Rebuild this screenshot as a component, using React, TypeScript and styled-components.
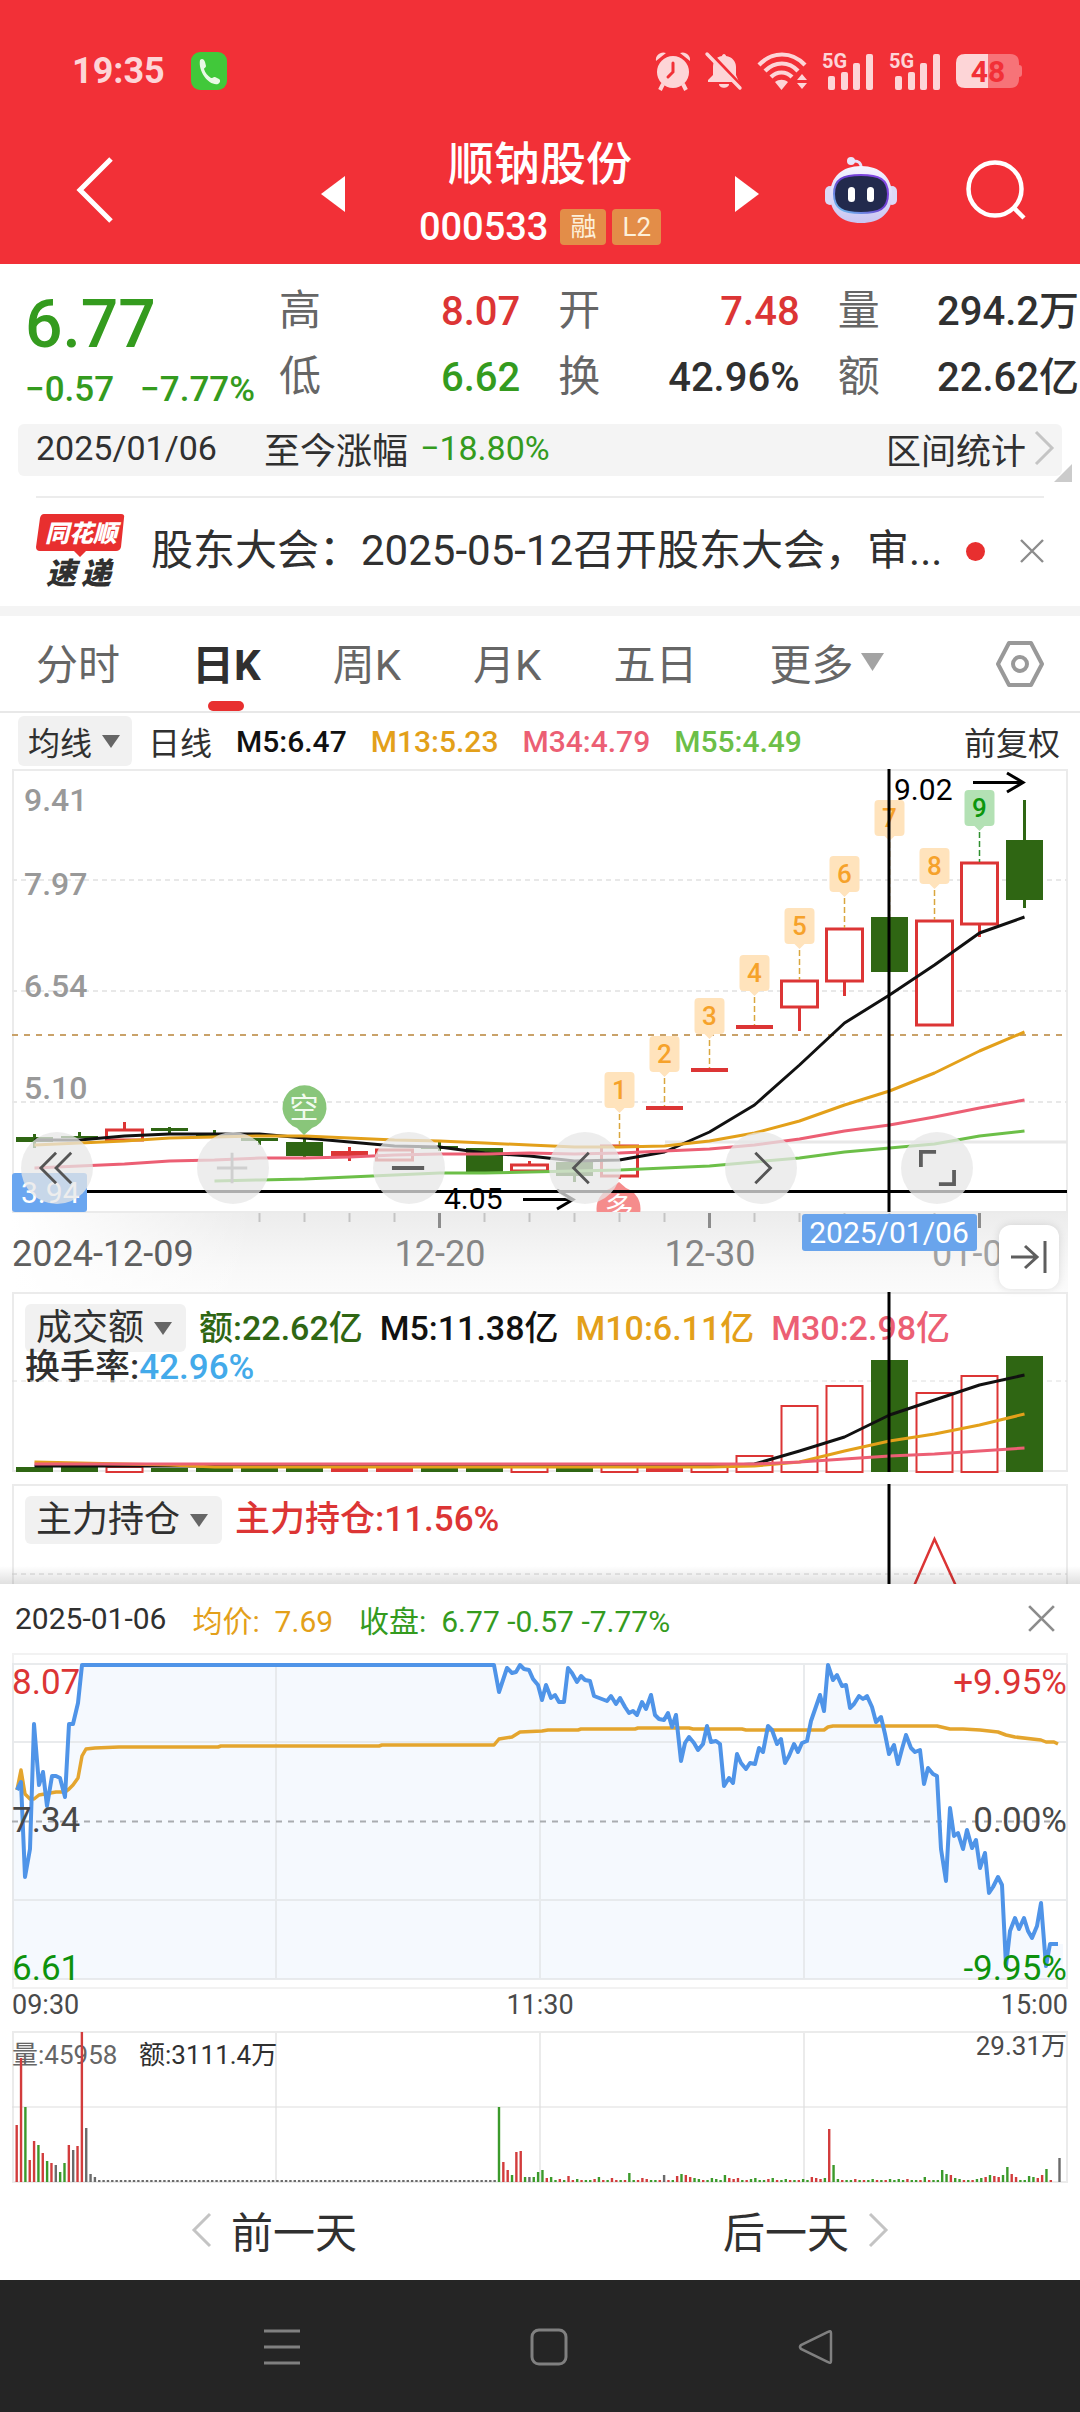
import React from 'react';
import styled, { createGlobalStyle } from 'styled-components';

const RED = '#f23037';
const UP = '#dc3535';
const DOWN = '#349b1e';
const CANDLE_DOWN = '#2f6613';
const INK = '#303030';
const GREY = '#666666';
const ORANGE = '#e3a01a';
const PINK = '#ec5f74';
const LIME = '#6cbf48';
const FONT = 'Roboto, "Noto Sans CJK SC", sans-serif';

const GlobalStyle = createGlobalStyle`
  * { box-sizing: border-box; }
  body { margin: 0; background: #ffffff; font-family: ${FONT}; color: ${INK}; }
  button { font: inherit; color: inherit; background: none; border: 0; padding: 0; margin: 0; cursor: pointer; white-space: nowrap; }
  svg { display: block; flex-shrink: 0; overflow: visible; }
`;

/* ---------- shared pieces ---------- */

const Page = styled.div`
  display: flex;
  flex-direction: column;
  min-width: 0;
  overflow: hidden;
`;

const IconButton = styled.button`
  display: flex;
  align-items: center;
  justify-content: center;
`;

const ChartSvg = styled.svg`
  width: 100%;
  height: auto;
  position: relative;
  overflow: hidden;
  pointer-events: none;
  font-family: ${FONT};
`;

const Tint = styled.span<{ $color: string }>`
  color: ${(p) => p.$color};
`;

/* ---------- header ---------- */

const Header = styled.header`
  background: ${RED};
  color: #ffffff;
`;

const StatusBar = styled.div`
  height: 124px;
  padding: 18px 58px 0 72px;
  display: flex;
  align-items: center;
  justify-content: space-between;
`;

const StatusGroup = styled.div<{ $gap: number }>`
  display: flex;
  align-items: center;
  gap: ${(p) => p.$gap}px;
`;

const Clock = styled.span`
  font-size: 36px;
  line-height: 40px;
  font-weight: 700;
  color: #fdd5d7;
`;

const NavRow = styled.div`
  height: 140px;
  display: grid;
  grid-template-columns: 321fr 438fr 321fr;
  align-items: center;
`;

const NavLeft = styled.div`
  padding: 0 0 8px 77px;
`;

const NavCenter = styled.div`
  height: 100%;
  display: flex;
  align-items: center;
  justify-content: space-between;
`;

const NavRight = styled.div`
  display: flex;
  align-items: center;
  justify-content: flex-end;
  gap: 69px;
  padding: 0 54px 8px 0;
`;

const TitleBlock = styled.div`
  align-self: flex-end;
  text-align: center;
`;

const StockName = styled.h1`
  margin: 0;
  font-size: 46px;
  line-height: 60px;
  font-weight: 500;
`;

const CodeRow = styled.div`
  height: 70px;
  padding-bottom: 4px;
  display: flex;
  align-items: center;
  gap: 6px;
  font-size: 38px;
  font-weight: 500;
`;

const Code = styled.span`
  margin-right: 6px;
`;

const Badge = styled.span`
  height: 36px;
  padding: 0 10px;
  border-radius: 4px;
  background: #e38d48;
  color: #fdf0da;
  font-size: 26px;
  line-height: 36px;
  font-weight: 400;
`;

/* ---------- quote ---------- */

const Quote = styled.section`
  display: flex;
  padding: 16px 1px 12px 25px;
`;

const PriceBlock = styled.div`
  width: 235px;
  margin-right: 19px;
  color: ${DOWN};
  font-weight: 500;
  white-space: nowrap;
`;

const Price = styled.div`
  font-size: 66px;
  line-height: 90px;
`;

const Change = styled.div`
  display: flex;
  gap: 26px;
  font-size: 35px;
  line-height: 40px;
`;

const Stats = styled.dl`
  flex: 1;
  margin: 0;
  display: grid;
  grid-template-columns: repeat(3, 1fr);
  column-gap: 38px;
`;

const Stat = styled.div`
  height: 66px;
  display: flex;
  align-items: center;
  justify-content: space-between;
  white-space: nowrap;
`;

const StatName = styled.dt`
  font-size: 42px;
  line-height: 60px;
  padding-bottom: 4px;
  color: ${GREY};
`;

const StatValue = styled.dd<{ $color: string }>`
  margin: 0;
  font-size: 40px;
  line-height: 60px;
  padding-bottom: 2px;
  font-weight: 500;
  color: ${(p) => p.$color};
`;

const RangeWrap = styled.div`
  position: relative;
  margin: 0 18px;
`;

const RangeBar = styled.div`
  height: 52px;
  padding: 0 7px 4px 18px;
  border-radius: 6px;
  background: #f4f4f4;
  display: flex;
  align-items: center;
  font-size: 34px;
  white-space: nowrap;
`;

const RangeLabel = styled.span`
  margin: 0 12px 0 47px;
  font-size: 36px;
`;

const RangeLink = styled.button`
  margin-left: auto;
  display: flex;
  align-items: center;
  gap: 8px;
  font-size: 35px;
`;

const Corner = styled.svg`
  position: absolute;
  right: -10px;
  bottom: -6px;
`;

/* ---------- news ---------- */

const News = styled.section`
  margin: 20px 36px 4px;
  height: 108px;
  border-top: 2px solid #ececec;
  display: flex;
  align-items: center;
`;

const NewsText = styled.a`
  flex: 1;
  min-width: 0;
  margin-left: 25px;
  font-size: 42px;
  line-height: 60px;
  color: ${INK};
  text-decoration: none;
  white-space: nowrap;
`;

const Dot = styled.span`
  width: 19px;
  height: 19px;
  margin-right: 35px;
  border-radius: 50%;
  background: #e82f2f;
`;

const Band = styled.div`
  height: 10px;
  margin-top: -2px;
  background: #f4f4f4;
`;

/* ---------- tabs ---------- */

const Tabs = styled.nav`
  height: 97px;
  padding: 0 35px 0 36px;
  border-bottom: 2px solid #e8e8e8;
  display: flex;
  align-items: stretch;
  gap: 72px;
`;

const Tab = styled.button<{ $active?: boolean }>`
  position: relative;
  padding-bottom: 4px;
  display: flex;
  align-items: center;
  gap: 8px;
  font-size: 42px;
  font-weight: ${(p) => (p.$active ? 700 : 400)};
  color: ${(p) => (p.$active ? INK : GREY)};
  &::after {
    content: '';
    display: ${(p) => (p.$active ? 'block' : 'none')};
    position: absolute;
    left: calc(50% - 18px);
    bottom: 0;
    width: 36px;
    height: 10px;
    border-radius: 5px;
    background: #e82f2f;
  }
`;

const SettingsButton = styled(IconButton)`
  margin-left: auto;
`;

/* ---------- indicators and panels ---------- */

const Legend = styled.div`
  height: 56px;
  padding: 0 20px 0 18px;
  display: flex;
  align-items: center;
  gap: 24px;
  font-size: 30px;
  font-weight: 500;
  white-space: nowrap;
`;

const LegendPick = styled.button`
  height: 50px;
  margin-right: -8px;
  padding: 0 12px 0 10px;
  border-radius: 6px;
  background: #f1f1f1;
  display: flex;
  align-items: center;
  gap: 10px;
  font-size: 32px;
  font-weight: 400;
`;

const LegendText = styled.span`
  font-size: 32px;
  font-weight: 400;
`;

const Adjust = styled(LegendText)`
  margin-left: auto;
`;

const Panel = styled.section`
  position: relative;
  margin: 0 12px;
`;

const Tools = styled.div`
  position: absolute;
  left: 9px;
  bottom: 88px;
  display: flex;
  gap: 104px;
`;

const ToolButton = styled(IconButton)`
  width: 72px;
  height: 72px;
  border-radius: 50%;
  background: rgba(231, 231, 231, 0.75);
`;

const JumpButton = styled(IconButton)`
  position: absolute;
  right: 9px;
  bottom: 3px;
  width: 60px;
  height: 64px;
  border-radius: 12px;
  background: #ffffff;
  box-shadow: 0 0 8px rgba(0, 0, 0, 0.12);
`;

const PanelHead = styled.div`
  position: absolute;
  top: 12px;
  left: 13px;
  right: 13px;
  white-space: nowrap;
`;

const PanelLine = styled.div<{ $gap: number; $size: number }>`
  display: flex;
  align-items: center;
  gap: ${(p) => p.$gap}px;
  font-size: ${(p) => p.$size}px;
  font-weight: 500;
  line-height: 32px;
`;

const PanelPick = styled.button`
  height: 48px;
  margin-right: -4px;
  padding: 0 14px 0 11px;
  border-radius: 6px;
  background: #f1f1f1;
  display: flex;
  align-items: center;
  gap: 10px;
  font-size: 36px;
  font-weight: 400;
`;

const LastPanel = styled(Panel)`
  margin-top: 11px;
`;

const Shade = styled.div`
  height: 18px;
  margin-top: -18px;
  position: relative;
  background: linear-gradient(rgba(0, 0, 0, 0), rgba(0, 0, 0, 0.12));
`;

/* ---------- day sheet ---------- */

const Sheet = styled.section`
  background: #ffffff;
`;

const SheetHead = styled.div`
  height: 69px;
  padding: 0 25px 0 15px;
  display: flex;
  align-items: center;
  gap: 26px;
  font-size: 30px;
  white-space: nowrap;
`;

const SheetClose = styled(IconButton)`
  margin-left: auto;
`;

const TimeRow = styled.div`
  height: 42px;
  display: grid;
  grid-template-columns: 1fr 1fr 1fr;
  font-size: 27px;
  line-height: 32px;
  color: #4a4a4a;
`;

const TimeMark = styled.span<{ $align: 'left' | 'center' | 'right' }>`
  text-align: ${(p) => p.$align};
`;

const DayNav = styled.div`
  height: 97px;
  padding: 0 191px 4px;
  display: flex;
  align-items: center;
  justify-content: space-between;
`;

const DayButton = styled.button`
  display: flex;
  align-items: center;
  gap: 19px;
  font-size: 42px;
`;

const SystemNav = styled.nav`
  height: 133px;
  padding: 0 247px 0 264px;
  background: #252525;
  display: flex;
  align-items: center;
  justify-content: space-between;
`;

/* ---------- icons ---------- */

const Caret = ({ w = 18, h = 13, color = GREY }: { w?: number; h?: number; color?: string }) => (
  <svg width={w} height={h} viewBox={`0 0 ${w} ${h}`} aria-hidden="true">
    <path d={`M0 0H${w}L${w / 2} ${h}Z`} fill={color} />
  </svg>
);

const Cross = ({ size, color = '#8c8c8c' }: { size: number; color?: string }) => (
  <svg width={size} height={size} viewBox="0 0 24 24" aria-hidden="true">
    <path d="M1 1 23 23M23 1 1 23" stroke={color} strokeWidth="2.4" />
  </svg>
);

const SideChevron = ({ dir }: { dir: 'left' | 'right' }) => (
  <svg width="21" height="36" viewBox="0 0 21 36" aria-hidden="true">
    <path d={dir === 'left' ? 'M19 2 3 18 19 34' : 'M2 2 18 18 2 34'} fill="none" stroke="#c4c4c4" strokeWidth="3" />
  </svg>
);

const PhoneIcon = () => (
  <svg width="36" height="38" viewBox="0 0 36 38" aria-hidden="true">
    <rect width="36" height="38" rx="9" fill="#41c83a" />
    <path d="M9 8c2-2 4-1 5 2l1 4c0 1.500-2 2-2 3 1 4 4 7 7 9 1.500.5 2.500-1.500 4-1l4 2c2 1.500 1 4-1 5-9 2-20-12-18-24Z" fill="#e9f9e6" />
  </svg>
);

const AlarmIcon = () => (
  <svg width="36" height="38" viewBox="0 0 36 38" fill="#fdd5d7" aria-hidden="true">
    <circle cx="18" cy="20" r="16" />
    <path d="M1 9C0 3 6-1 11 1ZM35 9c1-6-5-10-10-8Z" />
    <path d="m8 32-3 6M28 32l3 6" stroke="#fdd5d7" strokeWidth="4" />
    <path d="M18 11v9l-5 5" stroke={RED} strokeWidth="3" fill="none" strokeLinecap="round" />
  </svg>
);

const BellOffIcon = () => (
  <svg width="36" height="36" viewBox="0 0 36 36" fill="#fdd5d7" aria-hidden="true">
    <path d="M18 1c1 0 2 1 2 2 6 1 10 5 10 11v8l3 7H2v-2l5-5v-8c0-6 3-10 9-11 0-1 1-2 2-2ZM13 31h10c0 5-10 5-10 0Z" />
    <path d="M4 0 38 36" stroke={RED} strokeWidth="4" />
    <path d="M1 1 34 35" stroke="#fdd5d7" strokeWidth="3.400" strokeLinecap="round" />
  </svg>
);

const WifiIcon = () => (
  <svg width="50" height="38" viewBox="0 0 50 38" fill="none" stroke="#fdd5d7" strokeWidth="4.200" aria-hidden="true">
    <path d="M2 13C15-1 35-1 48 13M8 19c10-10 24-10 33 0M14 25c6-6 15-6 21 0" />
    <path d="M18 30c4-3 9-3 13 0l-6.500 8ZM40 28l5-6 5 6ZM40 31h10l-5 6Z" fill="#fdd5d7" stroke="none" />
  </svg>
);

const SignalIcon = () => (
  <svg width="52" height="38" viewBox="0 0 52 38" fill="#fdd5d7" fontFamily={FONT} aria-hidden="true">
    <text x="0" y="16" fontSize="20" fontWeight="700">5G</text>
    <rect x="6" y="24" width="7" height="14" rx="2" />
    <rect x="19" y="20" width="7" height="18" rx="2" />
    <rect x="31" y="11" width="7" height="27" rx="2" />
    <rect x="44" y="2" width="7" height="36" rx="2" />
  </svg>
);

const BatteryIcon = () => (
  <svg width="66" height="34" viewBox="0 0 66 34" fontFamily={FONT} aria-label="48%">
    <path d="M32 0H54Q63 0 63 9V11Q66 11 66 14V20Q66 23 63 23V25Q63 34 54 34H32Z" fill="#f77378" />
    <path d="M32 0H9Q0 0 0 9V25Q0 34 9 34H32Z" fill="#fdd5d7" />
    <text x="32" y="28" fontSize="30" fontWeight="700" fill={RED} textAnchor="middle">48</text>
  </svg>
);

const RobotIcon = () => (
  <svg width="72" height="66" viewBox="0 0 72 66" aria-hidden="true">
    <defs>
      <linearGradient id="shell" x1="0" y1="0" x2="0" y2="1">
        <stop offset="0" stopColor="#f6f4ff" />
        <stop offset="1" stopColor="#c9c5f2" />
      </linearGradient>
      <linearGradient id="rim" x1="0" y1="1" x2="1" y2="0">
        <stop offset="0" stopColor="#6fd0f4" />
        <stop offset="0.5" stopColor="#6a3fd0" />
        <stop offset="1" stopColor="#8a4be8" />
      </linearGradient>
    </defs>
    <path d="M27 4q10-1 9 8" fill="none" stroke="#e6e1fa" strokeWidth="3" />
    <circle cx="26" cy="4" r="4" fill="#e9e6fb" />
    <rect x="0" y="29" width="10" height="19" rx="5" fill="#dcd9f6" />
    <rect x="62" y="29" width="10" height="19" rx="5" fill="#dcd9f6" />
    <path d="M36 9C55 9 67 20 67 38S55 66 36 66 5 56 5 38 17 9 36 9Z" fill="url(#shell)" />
    <path d="M36 18C54 18 63 22 63 37S54 56 36 56 9 52 9 37 18 18 36 18Z" fill="#222a4d" stroke="url(#rim)" strokeWidth="2" />
    <rect x="23" y="30" width="7" height="15" rx="3.500" fill="#fff" />
    <rect x="42" y="30" width="7" height="15" rx="3.500" fill="#fff" />
  </svg>
);

const BrandLogo = () => (
  <svg width="90" height="76" viewBox="0 0 90 76" fontFamily={FONT} fontWeight="900" fontStyle="italic" role="img" aria-label="同花顺速递">
    <path d="M8 1H85Q89 1 88 5L85 34Q84 38 80 38H50L44 44 38 38H4Q0 38 0 34L4 5Q5 1 8 1Z" fill="#e82f2f" />
    <text x="9" y="29" fontSize="24" fill="#ffffff">同花顺</text>
    <text y="71" fontSize="30" fill={INK}>
      <tspan x="10">速</tspan>
      <tspan x="45">递</tspan>
    </text>
  </svg>
);

/* ---------- daily K-line ---------- */

const STEP = 45;
const centre = (i: number) => 22.500 + STEP * i;

type Candle = { top: number; bottom: number; high?: number; low?: number; kind: 'down' | 'up' | 'solid' };

const candles: Candle[] = [
  { top: 368, bottom: 373, high: 365, low: 379, kind: 'down' },
  { top: 367, bottom: 369, high: 363, kind: 'down' },
  { top: 360, bottom: 371, high: 353, kind: 'up' },
  { top: 359, bottom: 362, high: 358, low: 364, kind: 'down' },
  { top: 364, bottom: 367, high: 361, kind: 'down' },
  { top: 369, bottom: 372, low: 376, kind: 'down' },
  { top: 373, bottom: 387, high: 370, low: 388, kind: 'down' },
  { top: 382, bottom: 387, high: 378, low: 392, kind: 'solid' },
  { top: 380, bottom: 391, kind: 'up' },
  { top: 377, bottom: 380, high: 373, low: 382, kind: 'down' },
  { top: 379, bottom: 403, kind: 'down' },
  { top: 395, bottom: 402, high: 392, kind: 'up' },
  { top: 393, bottom: 407, low: 413, kind: 'down' },
  { top: 376, bottom: 407, low: 410, kind: 'up' },
  { top: 337, bottom: 341, kind: 'solid' },
  { top: 299, bottom: 303, kind: 'solid' },
  { top: 256, bottom: 260, kind: 'solid' },
  { top: 211, bottom: 238, low: 262, kind: 'up' },
  { top: 159, bottom: 212, low: 227, kind: 'up' },
  { top: 148, bottom: 203, kind: 'down' },
  { top: 151, bottom: 256, kind: 'up' },
  { top: 93, bottom: 155, low: 168, kind: 'up' },
  { top: 71, bottom: 131, high: 31, low: 139, kind: 'down' },
];

const ma5 = [371, 371, 367, 365, 365, 365, 369, 373, 377, 378, 384, 387, 392, 391, 383, 363, 336, 296, 254, 226, 196, 164, 148];
const ma13 = [376, 374, 372, 369, 368, 367, 367, 369, 371, 372, 374, 376, 378, 378, 377, 372, 364, 352, 336, 322, 304, 282, 263];
const ma34 = [399, 397, 395, 392, 391, 389, 389, 388, 386, 385, 385, 384, 385, 384, 382, 380, 376, 370, 362, 356, 348, 339, 331];
const ma55 = [412, 411, 410, 408, 406, 404, 404, 403, 402, 401, 399, 397, 393, 389, 383, 379, 375, 367, 362];

const series = (ys: number[], from = 0) => ys.map((y, k) => `${centre(k + from)},${y}`).join(' ');

const tags = [303, 267, 229, 186, 139, 87, 31, 79, 21];

const CandleShape = ({ c, i }: { c: Candle; i: number }) => {
  const x = centre(i);
  const color = c.kind === 'down' ? CANDLE_DOWN : UP;
  return (
    <g>
      {c.high !== undefined && <path d={`M${x} ${c.high}V${c.top}`} stroke={color} strokeWidth="3" />}
      {c.low !== undefined && <path d={`M${x} ${c.bottom}V${c.low}`} stroke={color} strokeWidth="3" />}
      {c.kind === 'up' ? (
        <rect x={x - 18} y={c.top + 1} width="36" height={c.bottom - c.top - 1} fill="#fff" stroke={color} strokeWidth="3" />
      ) : (
        <rect x={x - 18.500} y={c.top} width="37" height={c.bottom - c.top} fill={color} />
      )}
    </g>
  );
};

const KLine = () => (
  <ChartSvg viewBox="0 0 1056 523" role="img" aria-label="日K">
    <defs>
      <linearGradient id="axisFade" x1="0" y1="0" x2="0" y2="1">
        <stop offset="0" stopColor="#ececec" />
        <stop offset="0.7" stopColor="#f8f8f8" />
        <stop offset="1" stopColor="#fbfbfb" />
      </linearGradient>
      <linearGradient id="axisSide" x1="0" y1="0" x2="1" y2="0">
        <stop offset="0" stopColor="#fff" />
        <stop offset="1" stopColor="#fff" stopOpacity="0" />
      </linearGradient>
      <clipPath id="plot"><rect x="0" y="0" width="1056" height="443" /></clipPath>
    </defs>
    <rect x="0" y="443" width="1056" height="80" fill="url(#axisFade)" />
    <rect x="0" y="444" width="240" height="79" fill="url(#axisSide)" />
    <rect x="1" y="1" width="1054" height="442" fill="none" stroke="#ebebeb" strokeWidth="2" />
    <path d="M0 111H1055M0 222H1055M0 333H1055" stroke="#e8e8e8" strokeWidth="2" strokeDasharray="5 4" />
    <path d="M653 373H1055" stroke="#e8e8e8" strokeWidth="3" />
    <path d="M0 266H1055" stroke="#c9a269" strokeWidth="2" strokeDasharray="6 6" />

    <g fill="#999999" fontSize="32" fontWeight="500">
      <text x="12" y="42">9.41</text>
      <text x="12" y="126">7.97</text>
      <text x="12" y="228">6.54</text>
      <text x="12" y="330">5.10</text>
    </g>

    {candles.map((c, i) => <CandleShape key={i} c={c} i={i} />)}

    <g fill="none" strokeWidth="3" strokeLinejoin="round">
      <polyline points={series(ma5)} stroke="#111111" />
      <polyline points={series(ma13)} stroke={ORANGE} />
      <polyline points={series(ma34)} stroke={PINK} />
      <polyline points={series(ma55, 4)} stroke={LIME} />
    </g>

    {tags.map((top, k) => {
      const i = 13 + k;
      const x = centre(i);
      const green = k === 8;
      return (
        <g key={k}>
          <path d={`M${x} ${top + 42}V${candles[i].top}`} stroke={green ? '#2f8f2f' : '#d9a63e'} strokeWidth="1.500" strokeDasharray="6 3" />
          <path
            d={`M${x - 11} ${top}h22q4 0 4 4v28q0 4 -4 4h-6l-5 5-5-5h-6q-4 0-4-4v-28q0-4 4-4Z`}
            fill={green ? '#b3e1b4' : '#ffe3bc'}
          />
          <text x={x} y={top + 27} fontSize="26" fontWeight="500" textAnchor="middle" fill={green ? '#0c960c' : '#f6a22b'}>{k + 1}</text>
        </g>
      );
    })}

    <path d="M292 366l-7-7a22 22 0 1 1 15 0Z" fill="#89c67a" />
    <text x="292" y="350" fontSize="29" textAnchor="middle" fill="#f2fbef">空</text>
    <g clipPath="url(#plot)">
      <path d="M607 413l7 6a22 22 0 1 1-15 0Z" fill="#f58c8c" />
      <text x="607" y="450" fontSize="29" textAnchor="middle" fill="#fff">多</text>
    </g>

    <path d="M0 422.500H1055M877 0V443" stroke="#000" strokeWidth="3" />
    <g fontSize="30" fill="#000">
      <text x="882" y="31">9.02</text>
      <text x="432" y="440">4.05</text>
    </g>
    <g fill="none" stroke="#000" strokeWidth="3">
      <path d="M961 13.500H1011M995 4 1011 13.500 995 23" />
      <path d="M511 430.500H561M545 421 561 430.500 545 440" />
    </g>

    <rect x="0" y="404" width="75" height="39" rx="3" fill="#6aa6f0" />
    <text x="9" y="434" fontSize="30" fill="#fff">3.94</text>

    {Array.from({ length: 17 }, (_, k) => k + 5).map((i) => (
      <path
        key={i}
        d={`M${centre(i)} 444v${(i - 3) % 6 === 0 ? 15 : 9}`}
        stroke={(i - 3) % 6 === 0 ? '#8c8c8c' : '#c4c4c4'}
        strokeWidth={(i - 3) % 6 === 0 ? 3 : 2}
      />
    ))}
    <g fontSize="36" fill="#858585">
      <text x="0" y="497" fill="#5f5f5f">2024-12-09</text>
      <text x="428" y="497" textAnchor="middle">12-20</text>
      <text x="698" y="497" textAnchor="middle">12-30</text>
      <text x="920" y="497" fill="#a2a2a2">01-0</text>
    </g>
    <rect x="790" y="445" width="175" height="37" rx="3" fill="#69a4ec" />
    <text x="877" y="474" fontSize="30" textAnchor="middle" fill="#fff">2025/01/06</text>
  </ChartSvg>
);

/* ---------- turnover ---------- */

const turnover: { h: number; kind: Candle['kind'] }[] = [
  { h: 5, kind: 'down' }, { h: 5, kind: 'down' }, { h: 5, kind: 'up' }, { h: 4, kind: 'down' },
  { h: 4, kind: 'down' }, { h: 4, kind: 'down' }, { h: 4, kind: 'down' }, { h: 4, kind: 'solid' },
  { h: 4, kind: 'solid' }, { h: 4, kind: 'down' }, { h: 4, kind: 'down' }, { h: 5, kind: 'up' },
  { h: 4, kind: 'down' }, { h: 5, kind: 'up' }, { h: 4, kind: 'solid' }, { h: 5, kind: 'up' },
  { h: 16, kind: 'up' }, { h: 66, kind: 'up' }, { h: 86, kind: 'up' }, { h: 112, kind: 'down' },
  { h: 79, kind: 'up' }, { h: 96, kind: 'up' }, { h: 116, kind: 'down' },
];

const flat = (y: number, n: number) => Array.from({ length: n }, () => y);
const vol5 = [...flat(174, 16), 172, 159, 145, 123, 108, 93, 83];
const vol10 = [170, 171, 172, 173, ...flat(175, 12), 174, 170, 159, 149, 142, 133, 122];
const vol30 = [...flat(172, 17), 170, 167, 164, 162, 159, 156];

const TurnoverChart = () => (
  <ChartSvg viewBox="0 0 1056 181" role="img" aria-label="成交额">
    <rect x="1" y="1" width="1054" height="178" fill="none" stroke="#ebebeb" strokeWidth="2" />
    <path d="M0 89H1055" stroke="#dedede" strokeWidth="1" strokeDasharray="5 4" />
    {turnover.map((b, i) =>
      b.kind === 'up' ? (
        <rect key={i} x={centre(i) - 18} y={180 - b.h} width="36" height={b.h} fill="#fff" stroke={UP} strokeWidth="2" />
      ) : (
        <rect key={i} x={centre(i) - 18.500} y={180 - b.h} width="37" height={b.h} fill={b.kind === 'down' ? CANDLE_DOWN : UP} />
      ),
    )}
    <g fill="none" strokeWidth="3" strokeLinejoin="round">
      <polyline points={series(vol5)} stroke="#111111" />
      <polyline points={series(vol10)} stroke={ORANGE} />
      <polyline points={series(vol30)} stroke={PINK} />
    </g>
    <path d="M877 0V180" stroke="#000" strokeWidth="3" />
  </ChartSvg>
);

const HoldingChart = () => (
  <ChartSvg viewBox="0 0 1056 100" role="img" aria-label="主力持仓">
    <path d="M1 100V1H1055V100" fill="none" stroke="#ebebeb" strokeWidth="2" />
    <path d="M0 90H1055" stroke="#d4d4d4" strokeWidth="1" strokeDasharray="5 4" />
    <path d="M902 102 922.500 55 944 102" fill="none" stroke={UP} strokeWidth="2.500" />
    <path d="M877 0V100" stroke="#000" strokeWidth="3" />
  </ChartSvg>
);

/* ---------- minute chart ---------- */

const pricePoints =
  '5,137 9,129 13,224 18,196 22,71 27,132 31,119 35,153 40,123 44,123 48,125 53,144 57,71 61,71 66,50 70,12 482,12 487,39 495,15 500,20 504,19 508,12 512,16 517,17 521,26 526,32 530,47 534,32 539,45 543,42 547,49 552,49 556,15 560,20 565,29 569,23 573,27 578,28 582,43 595,48 599,43 604,51 608,45 613,54 617,60 621,58 625,62 630,49 634,56 639,42 643,62 647,66 652,67 656,60 660,74 664,62 669,108 673,90 677,84 682,90 686,97 691,91 695,73 699,89 704,88 708,91 712,133 717,125 721,130 725,101 729,110 734,116 738,110 743,111 747,95 751,99 756,73 760,77 765,91 769,86 773,110 777,103 782,91 786,99 790,90 795,88 799,68 808,42 812,58 816,12 821,27 825,22 830,33 834,32 838,55 842,51 847,43 851,46 855,43 860,54 864,69 869,64 873,81 877,101 882,92 886,111 890,96 894,82 899,95 903,99 908,97 912,131 916,115 921,121 925,123 929,196 934,228 938,155 942,183 946,180 951,196 955,177 960,195 964,187 968,215 973,200 977,240 981,234 986,224 990,232 994,313 998,278 1003,265 1007,276 1012,265 1016,278 1020,285 1025,273 1029,250 1034,313 1038,291 1046,291';

const averagePoints =
  '5,137 9,117 13,141 18,146 22,146 27,142 44,139 53,139 57,136 61,132 66,125 70,103 74,96 83,95 107,94 206,94 209,93 367,93 370,92 482,92 487,86 500,84 508,79 530,78 536,77 566,77 569,76 623,76 626,75 677,75 681,76 730,76 734,77 812,77 816,74 821,73 925,73 938,76 951,76 968,77 986,79 994,82 1003,84 1029,87 1034,89 1042,89 1046,91';

const MinuteChart = () => (
  <ChartSvg viewBox="0 0 1056 336" role="img" aria-label="分时">
    <rect x="1" y="1" width="1054" height="334" fill="none" stroke="#f2f2f2" strokeWidth="2" />
    <path d={`M1 326L1 137 ${pricePoints} 1051,291 1051,326Z`} fill="#e7f0fd" fillOpacity="0.4" />
    <path d="M0 11H1055M0 89H1055M0 247H1055M0 326H1055M1 11V326M264 11V326M528 11V326M792 11V326M1055 11V326" stroke="#e4e6e9" strokeWidth="2" strokeOpacity="0.8" />
    <path d="M0 168.500H1055" stroke="#a9acb0" strokeWidth="2" strokeDasharray="6 6" />
    <polyline points={averagePoints} fill="none" stroke="#e4a52e" strokeWidth="3.500" strokeLinejoin="round" />
    <polyline points={pricePoints} fill="none" stroke="#4f94e8" strokeWidth="4" strokeLinejoin="round" />
    <g fontSize="35">
      <g fill={UP}>
        <text x="0" y="41">8.07</text>
        <text x="1055" y="41" textAnchor="end">+9.95%</text>
      </g>
      <g fill="#484848">
        <text x="0" y="179">7.34</text>
        <text x="1055" y="179" textAnchor="end">0.00%</text>
      </g>
      <g fill="#0d920d">
        <text x="0" y="327">6.61</text>
        <text x="1055" y="327" textAnchor="end">-9.95%</text>
      </g>
    </g>
  </ChartSvg>
);

/* minute volume: [minute, height, colour] */
type Bar = [number, number, 'r' | 'g' | 'k'];

const volumeBars: Bar[] = [
  [0, 57, 'r'], [1, 124, 'r'], [2, 75, 'g'], [3, 22, 'r'], [4, 41, 'r'], [5, 37, 'g'], [6, 29, 'r'], [7, 21, 'g'],
  [8, 19, 'r'], [9, 17, 'k'], [10, 10, 'g'], [11, 19, 'g'], [12, 37, 'r'], [13, 32, 'k'], [14, 36, 'r'], [15, 150, 'r'],
  [16, 54, 'k'], [17, 8, 'k'], [18, 5, 'k'], [111, 75, 'g'], [112, 20, 'r'], [113, 12, 'r'], [114, 7, 'g'], [115, 30, 'r'],
  [116, 31, 'r'], [117, 5, 'g'], [118, 5, 'k'], [119, 5, 'g'], [120, 10, 'g'], [121, 12, 'g'], [122, 4, 'r'], [123, 5, 'g'],
  [127, 6, 'r'], [134, 5, 'g'], [137, 4, 'r'], [141, 9, 'g'], [144, 4, 'r'], [149, 7, 'k'], [152, 6, 'r'], [153, 8, 'g'],
  [154, 7, 'r'], [155, 5, 'r'], [156, 4, 'g'], [160, 4, 'g'], [163, 7, 'g'], [164, 4, 'r'], [166, 4, 'r'], [170, 4, 'g'],
  [174, 4, 'g'], [183, 5, 'r'], [184, 4, 'r'], [186, 4, 'g'], [187, 53, 'r'], [188, 17, 'g'], [203, 3, 'g'], [209, 5, 'g'],
  [213, 12, 'g'], [214, 8, 'g'], [215, 7, 'r'], [216, 4, 'g'], [222, 4, 'g'], [223, 5, 'r'], [224, 7, 'g'], [225, 6, 'r'],
  [226, 5, 'r'], [227, 7, 'g'], [228, 15, 'g'], [229, 8, 'r'], [230, 5, 'r'], [233, 6, 'g'], [234, 5, 'g'], [235, 4, 'r'],
  [236, 7, 'r'], [237, 13, 'g'], [238, 2, 'r'], [240, 24, 'k'],
];

const barColor = { r: '#d23c3c', g: '#3b9a2b', k: '#6b6b6b' };
const listed = new Set(volumeBars.map((b) => b[0]));
const quietBars: Bar[] = Array.from({ length: 238 }, (_, i) => i)
  .filter((i) => !listed.has(i))
  .map((i): Bar => (i < 111 ? [i, 2, 'k'] : [i, 2 + (i % 4 === 1 ? 1 : 0), (i * 7) % 5 < 2 ? 'r' : 'g']));

const VolumeChart = () => (
  <ChartSvg viewBox="0 0 1056 152" role="img" aria-label="成交量">
    <path d="M1 151V1H1055V151ZM264 1V151M528 1V151M792 1V151" fill="none" stroke="#ebebeb" strokeWidth="2" />
    <path d="M0 76H1055" stroke="#dddddd" strokeWidth="1" />
    <g fontSize="26">
      <text x="0" y="33" fill="#666">量:45958</text>
      <text x="127" y="33" fill="#303030">额:3111.4万</text>
      <text x="1055" y="24" fill="#4a4a4a" textAnchor="end">29.31万</text>
    </g>
    {[...volumeBars, ...quietBars].map(([m, h, c]) => (
      <rect key={m} x={3.500 + m * 4.345} y={151 - h} width="2.400" height={h} fill={barColor[c]} />
    ))}
  </ChartSvg>
);

/* ---------- page ---------- */

const stats: [string, string, string][] = [
  ['高', '8.07', UP],
  ['开', '7.48', UP],
  ['量', '294.2万', INK],
  ['低', '6.62', DOWN],
  ['换', '42.96%', INK],
  ['额', '22.62亿', INK],
];

const tools: [string, React.ReactNode][] = [
  ['最早', <path d="M17 1 1 17 17 33M33 1 17 17 33 33" stroke="#555" key="a" />],
  ['放大', <path d="M17 1V33M1 17H33" stroke="#cfcfcf" key="b" />],
  ['缩小', <path d="M0 17H34" stroke="#5e5e5e" strokeWidth="4" key="c" />],
  ['向左', <path d="M22 1 6 17 22 33" stroke="#555" key="d" />],
  ['向右', <path d="M12 1 28 17 12 33" stroke="#555" key="e" />],
  ['全屏', <path d="M17 0H1V16M36 19V34H20" stroke="#5e5e5e" strokeWidth="4" key="f" />],
];

export default function App() {
  return (
    <Page>
      <GlobalStyle />
      <Header>
        <StatusBar>
          <StatusGroup $gap={26}>
            <Clock>19:35</Clock>
            <PhoneIcon />
          </StatusGroup>
          <StatusGroup $gap={15}>
            <AlarmIcon />
            <BellOffIcon />
            <WifiIcon />
            <SignalIcon />
            <SignalIcon />
            <BatteryIcon />
          </StatusGroup>
        </StatusBar>
        <NavRow>
          <NavLeft>
            <IconButton aria-label="返回">
              <svg width="36" height="66" viewBox="0 0 36 66"><path d="M34 2 3 33 34 64" fill="none" stroke="#fff" strokeWidth="5" /></svg>
            </IconButton>
          </NavLeft>
          <NavCenter>
            <IconButton aria-label="上一只">
              <svg width="24" height="36" viewBox="0 0 24 36"><path d="M24 0V36L0 18Z" fill="#fff" /></svg>
            </IconButton>
            <TitleBlock>
              <StockName>顺钠股份</StockName>
              <CodeRow>
                <Code>000533</Code>
                <Badge>融</Badge>
                <Badge>L2</Badge>
              </CodeRow>
            </TitleBlock>
            <IconButton aria-label="下一只">
              <svg width="24" height="36" viewBox="0 0 24 36"><path d="M0 0V36L24 18Z" fill="#fff" /></svg>
            </IconButton>
          </NavCenter>
          <NavRight>
            <IconButton aria-label="助手"><RobotIcon /></IconButton>
            <IconButton aria-label="搜索">
              <svg width="60" height="60" viewBox="0 0 60 60" fill="none" stroke="#fff" strokeWidth="4.500">
                <circle cx="29" cy="29" r="26.500" />
                <path d="M47 47 58 58" />
              </svg>
            </IconButton>
          </NavRight>
        </NavRow>
      </Header>

      <Quote>
        <PriceBlock>
          <Price>6.77</Price>
          <Change><span>−0.57</span><span>−7.77%</span></Change>
        </PriceBlock>
        <Stats>
          {stats.map(([name, value, color]) => (
            <Stat key={name}>
              <StatName>{name}</StatName>
              <StatValue $color={color}>{value}</StatValue>
            </Stat>
          ))}
        </Stats>
      </Quote>

      <RangeWrap>
        <RangeBar>
          <span>2025/01/06</span>
          <RangeLabel>至今涨幅</RangeLabel>
          <Tint $color={DOWN}>−18.80%</Tint>
          <RangeLink>区间统计<SideChevron dir="right" /></RangeLink>
        </RangeBar>
        <Corner width="18" height="18" viewBox="0 0 18 18" aria-hidden="true"><path d="M18 0V18H0Z" fill="#cbcbcb" /></Corner>
      </RangeWrap>

      <News>
        <BrandLogo />
        <NewsText href="#news">股东大会：2025-05-12召开股东大会，审...</NewsText>
        <Dot />
        <IconButton aria-label="关闭"><Cross size={24} /></IconButton>
      </News>
      <Band />

      <Tabs>
        <Tab>分时</Tab>
        <Tab $active>日K</Tab>
        <Tab>周K</Tab>
        <Tab>月K</Tab>
        <Tab>五日</Tab>
        <Tab>更多<Caret w={23} h={18} color="#a3a3a3" /></Tab>
        <SettingsButton aria-label="设置">
          <svg width="50" height="48" viewBox="0 0 50 48" fill="none" stroke="#999" strokeWidth="4" strokeLinejoin="round">
            <path d="M14 3H36L47 24 36 45H14L3 24Z" />
            <circle cx="25" cy="24" r="7" />
          </svg>
        </SettingsButton>
      </Tabs>

      <Legend>
        <LegendPick>均线<Caret /></LegendPick>
        <LegendText>日线</LegendText>
        <Tint $color="#111111">M5:6.47</Tint>
        <Tint $color={ORANGE}>M13:5.23</Tint>
        <Tint $color={PINK}>M34:4.79</Tint>
        <Tint $color={LIME}>M55:4.49</Tint>
        <Adjust>前复权</Adjust>
      </Legend>

      <Panel>
        <KLine />
        <Tools>
          {tools.map(([label, shape]) => (
            <ToolButton key={label} aria-label={label}>
              <svg width="36" height="36" viewBox="-1 -1 38 36" fill="none" strokeWidth="3">{shape}</svg>
            </ToolButton>
          ))}
        </Tools>
        <JumpButton aria-label="最新">
          <svg width="36" height="34" viewBox="0 0 36 34" fill="none" stroke="#5e5e5e" strokeWidth="3">
            <path d="M0 17H26M14 6 26 17 14 28M34 1V33" />
          </svg>
        </JumpButton>
      </Panel>

      <Panel>
        <PanelHead>
          <PanelLine $gap={17} $size={34}>
            <PanelPick>成交额<Caret /></PanelPick>
            <Tint $color={CANDLE_DOWN}>额:22.62亿</Tint>
            <Tint $color="#111111">M5:11.38亿</Tint>
            <Tint $color={ORANGE}>M10:6.11亿</Tint>
            <Tint $color={PINK}>M30:2.98亿</Tint>
          </PanelLine>
          <PanelLine $gap={0} $size={35}>
            换手率:<Tint $color="#43aaea">42.96%</Tint>
          </PanelLine>
        </PanelHead>
        <TurnoverChart />
      </Panel>

      <LastPanel>
        <PanelHead>
          <PanelLine $gap={17} $size={35}>
            <PanelPick>主力持仓<Caret /></PanelPick>
            <Tint $color={UP}>主力持仓:11.56%</Tint>
          </PanelLine>
        </PanelHead>
        <HoldingChart />
      </LastPanel>
      <Shade />

      <Sheet>
        <SheetHead>
          <span>2025-01-06</span>
          <Tint $color={ORANGE}>均价:&nbsp; 7.69</Tint>
          <Tint $color={DOWN}>收盘:&nbsp; 6.77 -0.57 -7.77%</Tint>
          <SheetClose aria-label="关闭"><Cross size={27} /></SheetClose>
        </SheetHead>
        <Panel>
          <MinuteChart />
          <TimeRow>
            <TimeMark $align="left">09:30</TimeMark>
            <TimeMark $align="center">11:30</TimeMark>
            <TimeMark $align="right">15:00</TimeMark>
          </TimeRow>
          <VolumeChart />
        </Panel>
        <DayNav>
          <DayButton><SideChevron dir="left" />前一天</DayButton>
          <DayButton>后一天<SideChevron dir="right" /></DayButton>
        </DayNav>
      </Sheet>

      <SystemNav>
        <IconButton aria-label="菜单">
          <svg width="36" height="36" viewBox="0 0 36 36"><path d="M0 2H36M0 18H36M0 34H36" stroke="#808080" strokeWidth="3" /></svg>
        </IconButton>
        <IconButton aria-label="主页">
          <svg width="38" height="38" viewBox="0 0 38 38"><rect x="2" y="2" width="34" height="34" rx="7" fill="none" stroke="#808080" strokeWidth="3" /></svg>
        </IconButton>
        <IconButton aria-label="后退">
          <svg width="35" height="36" viewBox="0 0 35 36"><path d="M33 4V32Q33 35 30 33L3 20Q1 18 3 16L30 3Q33 1 33 4Z" fill="none" stroke="#808080" strokeWidth="2.500" /></svg>
        </IconButton>
      </SystemNav>
    </Page>
  );
}
